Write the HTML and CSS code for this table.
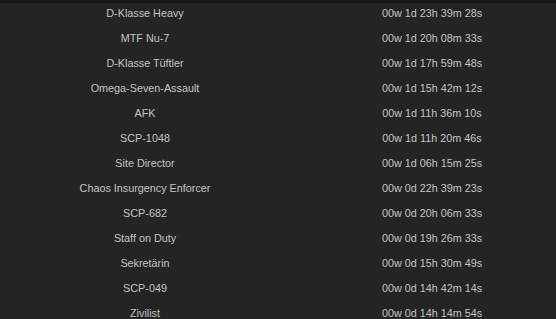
FILE: index.html
```html
<!DOCTYPE html>
<html>
<head>
<meta charset="utf-8">
<link rel="stylesheet" href="styles.css">
</head>
<body>
<div class="topbar"></div>
<div class="list">
  <div class="row"><span class="name">D-Klasse Heavy</span><span class="time">00w 1d 23h 39m 28s</span></div>
  <div class="row"><span class="name">MTF Nu-7</span><span class="time">00w 1d 20h 08m 33s</span></div>
  <div class="row"><span class="name">D-Klasse Tüftler</span><span class="time">00w 1d 17h 59m 48s</span></div>
  <div class="row"><span class="name">Omega-Seven-Assault</span><span class="time">00w 1d 15h 42m 12s</span></div>
  <div class="row"><span class="name">AFK</span><span class="time">00w 1d 11h 36m 10s</span></div>
  <div class="row"><span class="name">SCP-1048</span><span class="time">00w 1d 11h 20m 46s</span></div>
  <div class="row"><span class="name">Site Director</span><span class="time">00w 1d 06h 15m 25s</span></div>
  <div class="row"><span class="name">Chaos Insurgency Enforcer</span><span class="time">00w 0d 22h 39m 23s</span></div>
  <div class="row"><span class="name">SCP-682</span><span class="time">00w 0d 20h 06m 33s</span></div>
  <div class="row"><span class="name">Staff on Duty</span><span class="time">00w 0d 19h 26m 33s</span></div>
  <div class="row"><span class="name">Sekretärin</span><span class="time">00w 0d 15h 30m 49s</span></div>
  <div class="row"><span class="name">SCP-049</span><span class="time">00w 0d 14h 42m 14s</span></div>
  <div class="row"><span class="name">Zivilist</span><span class="time">00w 0d 14h 14m 54s</span></div>
</div>
</body>
</html>
```
FILE: styles.css
```css
html, body {
  margin: 0;
  padding: 0;
  background: #242424;
  overflow: hidden;
}
body {
  width: 556px;
  height: 319px;
  position: relative;
  font-family: "Liberation Sans", Arial, sans-serif;
  font-size: 10.8px;
  color: #c4c4c4;
}
.topbar {
  position: absolute;
  top: 0;
  left: 0;
  right: 0;
  height: 3px;
  background: #151515;
}
.list {
  display: flex;
  flex-direction: column;
}
.row {
  display: grid;
  grid-template-columns: 290px 1fr;
  height: 25px;
  align-items: center;
}
.name {
  text-align: center;
}
.time {
  text-align: center;
  padding-left: 18px;
}
```
